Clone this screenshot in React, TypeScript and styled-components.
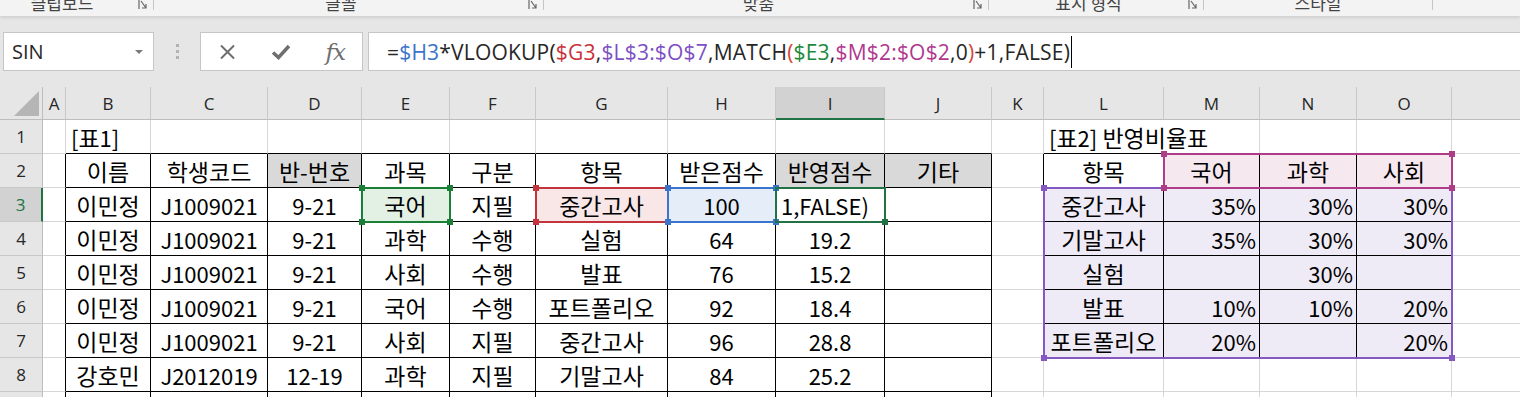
import React from 'react';
import styled, { createGlobalStyle } from 'styled-components';

const GlobalStyle = createGlobalStyle`
  *, *::before, *::after { box-sizing: border-box; }
  html, body { margin: 0; padding: 0; background: #e6e6e6; overflow: hidden; }
  #root { width: 1520px; height: 397px; overflow: hidden; }
`;

const CELL_FONT = `"Noto Sans CJK KR", "Open Sans", sans-serif`;
const UI_FONT = `"Open Sans", "Noto Sans CJK KR", sans-serif`;

/* ---------- Ribbon strip ---------- */
const RibbonStrip = styled.div`
  position: relative;
  z-index: 1;
  display: flex;
  height: 16px;
  background: #f3f3f3;
  overflow: hidden;
  box-shadow: 0 1px 4px rgba(0, 0, 0, 0.14);
`;

const RibbonGroup = styled.div<{ $w: number }>`
  display: flex;
  align-items: flex-start;
  flex: 0 0 ${p => p.$w}px;
`;

const GroupLabel = styled.div<{ $shift: number }>`
  flex: 1;
  text-align: center;
  margin-top: -6px;
  padding-right: ${p => p.$shift}px;
  font: 17px/17px ${CELL_FONT};
  color: #444;
  white-space: nowrap;
`;

const Launcher = styled.svg`
  flex: 0 0 10px;
  height: 10px;
  margin-right: 5px;
`;

const GroupDivider = styled.div`
  flex: 0 0 1px;
  height: 10px;
  background: #c6c6c6;
`;

/* ---------- Formula bar ---------- */
const FormulaRow = styled.div`
  display: flex;
  height: 39px;
  margin: 16px 0 16px 0;
`;

const NameBox = styled.div`
  display: flex;
  align-items: center;
  justify-content: space-between;
  flex: 0 0 151px;
  margin-left: 3px;
  padding: 0 10px 0 8px;
  background: #fff;
  border: 1px solid #c6c6c6;
  font: 20px ${UI_FONT};
  color: #262626;
`;

const DropArrow = styled.span`
  width: 0;
  height: 0;
  border-left: 4px solid transparent;
  border-right: 4px solid transparent;
  border-top: 4px solid #7a7a7a;
`;

const Grip = styled.div`
  flex: 0 0 46px;
  display: flex;
  flex-direction: column;
  align-items: center;
  justify-content: center;
  gap: 3px;
`;

const GripDot = styled.span`
  width: 3px;
  height: 3px;
  background: #b3b3b3;
`;

const FxBox = styled.div`
  flex: 0 0 163px;
  display: grid;
  grid-template-columns: repeat(3, 1fr);
  align-items: center;
  justify-items: center;
  background: #fff;
  border: 1px solid #c6c6c6;
`;

const FxText = styled.span`
  font: italic 23px "DejaVu Serif", "Liberation Serif", serif;
  color: #6e6e6e;
  letter-spacing: -1px;
`;

const FormulaInput = styled.div`
  flex: 1;
  display: flex;
  align-items: center;
  margin-left: 5px;
  padding-left: 18px;
  background: #fff;
  border: 1px solid #c6c6c6;
  border-right: none;
  font: 21px ${UI_FONT};
  letter-spacing: 0.2px;
  color: #262626;
  white-space: nowrap;
`;

const Tok = styled.span<{ $c: string }>`
  color: ${p => p.$c};
`;

const Caret = styled.span`
  display: inline-block;
  width: 1px;
  height: 32px;
  margin-left: 1px;
  background: #000;
`;

/* ---------- Sheet grid ---------- */
const Sheet = styled.div`
  display: grid;
  grid-template-columns: 43px 23px 85px 117px 94px 88px 86px 132px 108px 109px 107px 52px 120px 96px 97px 95px 150px;
  grid-template-rows: 33px repeat(9, 34px);
  width: 1602px;
  background: #fff;
`;

const Corner = styled.div`
  grid-column: 1;
  grid-row: 1;
  display: flex;
  justify-content: flex-end;
  align-items: flex-end;
  padding: 0 3px 3px 0;
  background: #e6e6e6;
  border-right: 1px solid #bdbdbd;
  border-bottom: 1px solid #bdbdbd;
`;

const CornerTriangle = styled.div`
  width: 25px;
  height: 25px;
  background: #b5b5b5;
  clip-path: polygon(100% 0, 100% 100%, 0 100%);
`;

const ColHead = styled.div<{ $c: number; $sel?: boolean }>`
  grid-column: ${p => p.$c};
  grid-row: 1;
  display: flex;
  align-items: center;
  justify-content: center;
  background: ${p => (p.$sel ? '#d2d2d2' : '#e6e6e6')};
  border-right: 1px solid #c8c8c8;
  border-bottom: ${p => (p.$sel ? '2px solid #217346' : '1px solid #bdbdbd')};
  font: 17px ${UI_FONT};
  color: #262626;
  padding-top: ${p => (p.$sel ? '1px' : '0')};
`;

const RowHead = styled.div<{ $r: number; $sel?: boolean }>`
  grid-column: 1;
  grid-row: ${p => p.$r};
  display: flex;
  align-items: center;
  justify-content: center;
  background: ${p => (p.$sel ? '#d2d2d2' : '#e6e6e6')};
  border-right: ${p => (p.$sel ? '2px solid #217346' : '1px solid #bdbdbd')};
  border-bottom: 1px solid #c8c8c8;
  font: 17px ${UI_FONT};
  color: ${p => (p.$sel ? '#217346' : '#262626')};
`;

type Align = 'left' | 'center' | 'right';

const Cell = styled.div<{
  $c: number;
  $r: number;
  $align: Align;
  $fill?: string;
  $rb: string;
  $bb: string;
}>`
  grid-column: ${p => p.$c};
  grid-row: ${p => p.$r};
  min-width: 0;
  display: flex;
  align-items: center;
  justify-content: ${p => (p.$align === 'left' ? 'flex-start' : p.$align === 'right' ? 'flex-end' : 'center')};
  padding: 0 ${p => (p.$align === 'right' ? '3px' : '0')} 0 ${p => (p.$align === 'left' ? '5px' : '0')};
  background: ${p => p.$fill ?? 'transparent'};
  border-right: 1px solid ${p => p.$rb};
  border-bottom: 1px solid ${p => p.$bb};
  font: 22px ${CELL_FONT};
  color: #000;
  white-space: nowrap;
`;

const CellText = styled.span`
  line-height: 30px;
`;

const Hangul = styled.span`
  font-size: 23px;
`;

const RangeBox = styled.div<{ $col: string; $row: string; $color: string }>`
  grid-column: ${p => p.$col};
  grid-row: ${p => p.$row};
  position: relative;
  z-index: 2;
  margin: -1px;
  border: 2px solid ${p => p.$color};
  pointer-events: none;
`;

const Handle = styled.span<{ $pos: 'tl' | 'tr' | 'bl' | 'br'; $color: string }>`
  position: absolute;
  width: 6px;
  height: 6px;
  background: ${p => p.$color};
  ${p => (p.$pos[0] === 't' ? 'top: -4px;' : 'bottom: -4px;')}
  ${p => (p.$pos[1] === 'l' ? 'left: -4px;' : 'right: -4px;')}
`;

/* ---------- data ---------- */
const LETTERS = 'ABCDEFGHIJKLMNOP'.split('');

const T1: Record<number, string[]> = {
  2: ['이름', '학생코드', '반-번호', '과목', '구분', '항목', '받은점수', '반영점수', '기타'],
  3: ['이민정', 'J1009021', '9-21', '국어', '지필', '중간고사', '100', '1,FALSE)', ''],
  4: ['이민정', 'J1009021', '9-21', '과학', '수행', '실험', '64', '19.2', ''],
  5: ['이민정', 'J1009021', '9-21', '사회', '수행', '발표', '76', '15.2', ''],
  6: ['이민정', 'J1009021', '9-21', '국어', '수행', '포트폴리오', '92', '18.4', ''],
  7: ['이민정', 'J1009021', '9-21', '사회', '지필', '중간고사', '96', '28.8', ''],
  8: ['강호민', 'J2012019', '12-19', '과학', '지필', '기말고사', '84', '25.2', ''],
};

const T2: Record<number, string[]> = {
  2: ['항목', '국어', '과학', '사회'],
  3: ['중간고사', '35%', '30%', '30%'],
  4: ['기말고사', '35%', '30%', '30%'],
  5: ['실험', '', '30%', ''],
  6: ['발표', '10%', '10%', '20%'],
  7: ['포트폴리오', '20%', '', '20%'],
};

const inT1 = (ci: number, r: number) => ci >= 1 && ci <= 9 && r >= 2 && r <= 9;
const inT2 = (ci: number, r: number) => ci >= 11 && ci <= 14 && r >= 2 && r <= 7;
const inTable = (ci: number, r: number) => inT1(ci, r) || inT2(ci, r);

const FILLS: Record<string, string> = {
  D2: '#d9d9d9',
  I2: '#d9d9d9',
  J2: '#d9d9d9',
  E3: '#e3f1e5',
  G3: '#f9e6e7',
  H3: '#e5edf8',
  M2: '#f6e8ef',
  N2: '#f6e8ef',
  O2: '#f6e8ef',
};

function spec(ci: number, r: number): { text: string; align: Align; fill?: string } {
  const name = LETTERS[ci] + r;
  let fill = FILLS[name];
  if (ci >= 11 && ci <= 14 && r >= 3 && r <= 7) fill = '#efebf6';
  if (name === 'B1') return { text: '[표1]', align: 'left' };
  if (name === 'L1') return { text: '[표2] 반영비율표', align: 'left' };
  if (T1[r] && ci >= 1 && ci <= 9) {
    return { text: T1[r][ci - 1], align: name === 'I3' ? 'left' : 'center', fill };
  }
  if (T2[r] && ci >= 11 && ci <= 14) {
    const align: Align = ci === 11 || r === 2 ? 'center' : 'right';
    return { text: T2[r][ci - 11], align, fill };
  }
  return { text: '', align: 'center', fill };
}

const HANGUL_RE = /([\uAC00-\uD7A3\u3131-\u318E ]+)/;
const HANGUL_TEST = /[\uAC00-\uD7A3\u3131-\u318E]/;

function renderRuns(text: string) {
  return text
    .split(HANGUL_RE)
    .filter(s => s.length > 0)
    .map((s, i) =>
      HANGUL_TEST.test(s) ? <Hangul key={i}>{s}</Hangul> : <React.Fragment key={i}>{s}</React.Fragment>,
    );
}

const GRID = '#d6d6d6';
const BLACK = '#000';

type Range = { col: string; row: string; color: string; handles: ('tl' | 'tr' | 'bl' | 'br')[] };
const ALL: ('tl' | 'tr' | 'bl' | 'br')[] = ['tl', 'tr', 'bl', 'br'];
const RANGES: Range[] = [
  { col: '6 / 7', row: '4 / 5', color: '#1b8037', handles: ALL },
  { col: '8 / 9', row: '4 / 5', color: '#c4343d', handles: ALL },
  { col: '9 / 10', row: '4 / 5', color: '#3a74cc', handles: ALL },
  { col: '10 / 11', row: '4 / 5', color: '#217346', handles: ['br'] },
  { col: '13 / 17', row: '4 / 9', color: '#8459c2', handles: ALL },
  { col: '14 / 17', row: '3 / 4', color: '#ae3c88', handles: ALL },
];

const FORMULA: [string, string][] = [
  ['=', '#262626'],
  ['$H3', '#3a74cc'],
  ['*VLOOKUP(', '#262626'],
  ['$G3', '#c9303a'],
  [',', '#262626'],
  ['$L$3:$O$7', '#7d4fc4'],
  [',MATCH', '#262626'],
  ['(', '#d2443a'],
  ['$E3', '#1b8a3a'],
  [',', '#262626'],
  ['$M$2:$O$2', '#b0388e'],
  [',0', '#262626'],
  [')', '#d2443a'],
  ['+1,FALSE)', '#262626'],
];

const GROUPS = [
  { w: 154, label: '클립보드', launcher: true, shift: 14 },
  { w: 390, label: '글꼴', launcher: true, shift: 0 },
  { w: 445, label: '맞춤', launcher: true, shift: 0 },
  { w: 215, label: '표시 형식', launcher: true, shift: 0 },
  { w: 229, label: '스타일', launcher: false, shift: 0 },
];

const LauncherIcon = () => (
  <Launcher viewBox="0 0 10 10">
    <path d="M1 0 V9 M3 1 L8 8 M8 4 V8 H4" stroke="#666" strokeWidth="1.2" fill="none" />
  </Launcher>
);

export default function App() {
  const rows = [1, 2, 3, 4, 5, 6, 7, 8, 9];
  return (
    <>
      <GlobalStyle />
      <RibbonStrip>
        {GROUPS.map(g => (
          <RibbonGroup key={g.label} $w={g.w}>
            <GroupLabel $shift={g.shift}>{g.label}</GroupLabel>
            {g.launcher && <LauncherIcon />}
            <GroupDivider />
          </RibbonGroup>
        ))}
      </RibbonStrip>

      <FormulaRow>
        <NameBox>
          <span>SIN</span>
          <DropArrow />
        </NameBox>
        <Grip>
          <GripDot />
          <GripDot />
          <GripDot />
        </Grip>
        <FxBox>
          <svg width="17" height="16" viewBox="0 0 17 16">
            <path d="M2 1.5 L15 14.5 M15 1.5 L2 14.5" stroke="#6e6e6e" strokeWidth="2" fill="none" />
          </svg>
          <svg width="20" height="16" viewBox="0 0 20 16">
            <path d="M2 8.5 L7.5 13.5 L18 2" stroke="#6e6e6e" strokeWidth="3.4" fill="none" />
          </svg>
          <FxText>fx</FxText>
        </FxBox>
        <FormulaInput>
          {FORMULA.map(([t, c], i) => (
            <Tok key={i} $c={c}>
              {t}
            </Tok>
          ))}
          <Caret />
        </FormulaInput>
      </FormulaRow>

      <Sheet>
        <Corner>
          <CornerTriangle />
        </Corner>
        {LETTERS.map((l, i) => (
          <ColHead key={l} $c={i + 2} $sel={l === 'I'}>
            {l}
          </ColHead>
        ))}
        {rows.map(r => (
          <React.Fragment key={r}>
            <RowHead $r={r + 1} $sel={r === 3}>
              {r}
            </RowHead>
            {LETTERS.map((l, ci) => {
              const s = spec(ci, r);
              let rb = inTable(ci, r) || inTable(ci + 1, r) ? BLACK : GRID;
              if (l + r === 'L1') rb = 'transparent';
              const bb = inTable(ci, r) || inTable(ci, r + 1) ? BLACK : GRID;
              return (
                <Cell key={l + r} $c={ci + 2} $r={r + 1} $align={s.align} $fill={s.fill} $rb={rb} $bb={bb}>
                  {s.text && <CellText>{renderRuns(s.text)}</CellText>}
                </Cell>
              );
            })}
          </React.Fragment>
        ))}
        {RANGES.map((g, i) => (
          <RangeBox key={i} $col={g.col} $row={g.row} $color={g.color}>
            {g.handles.map(h => (
              <Handle key={h} $pos={h} $color={g.color} />
            ))}
          </RangeBox>
        ))}
      </Sheet>
    </>
  );
}
